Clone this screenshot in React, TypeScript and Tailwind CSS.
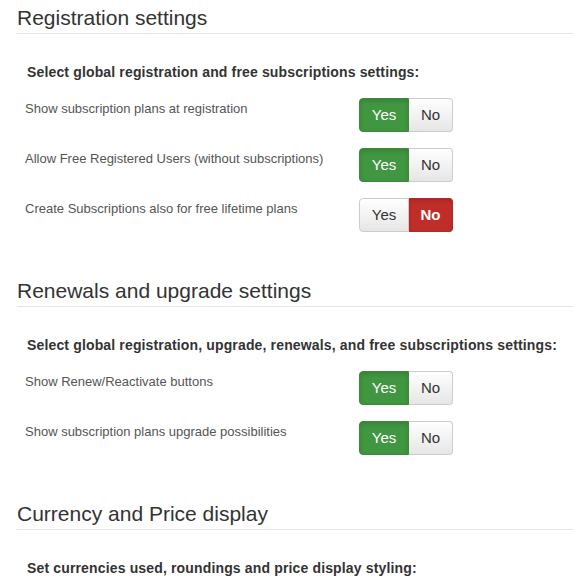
import React from "react";

type Row = { label: string; value: boolean };

function Toggle({ value }: { value: boolean }) {
  const base =
    "h-[34px] flex items-center justify-center text-[15px] border";
  return (
    <div className="flex">
      <div
        className={
          base +
          " w-[50px] rounded-l-[4px] " +
          (value
            ? "bg-[#419641] border-[#3a8a3a] text-white shadow-[inset_0_2px_4px_rgba(0,0,0,0.15)]"
            : "bg-gradient-to-b from-white to-[#e6e6e6] border-[#cccccc] text-[#333]")
        }
      >
        Yes
      </div>
      <div
        className={
          base +
          " w-[44px] rounded-r-[4px] border-l-0 " +
          (!value
            ? "bg-[#c12e2a] border-[#b02a26] text-white font-bold shadow-[inset_0_2px_4px_rgba(0,0,0,0.15)]"
            : "bg-gradient-to-b from-white to-[#e6e6e6] border-[#cccccc] text-[#333]")
        }
      >
        No
      </div>
    </div>
  );
}

function Section({
  title,
  subtitle,
  rows,
}: {
  title: string;
  subtitle: string;
  rows: Row[];
}) {
  return (
    <div className="flex flex-col">
      <h3 className="text-[21px] leading-[24px] pt-[6px] pb-[3px] border-b border-[#e5e5e5] text-[#333] font-normal">
        {title}
      </h3>
      <p className="mt-[29px] ml-[10px] text-[14px] leading-[18px] tracking-[0.15px] font-bold text-[#333]">
        {subtitle}
      </p>
      {rows.length > 0 && (
        <div className="mt-[17px] ml-[8px] flex flex-col gap-[16px]">
          {rows.map((r) => (
            <div key={r.label} className="flex">
              <div className="w-[334px] pt-[1.5px] text-[13px] leading-[18px] text-[#555]">
                {r.label}
              </div>
              <Toggle value={r.value} />
            </div>
          ))}
        </div>
      )}
    </div>
  );
}

export default function App() {
  return (
    <div
      className="w-[573px] h-[586px] overflow-hidden bg-white pl-[17px] flex flex-col gap-[41px]"
      style={{ fontFamily: '"Liberation Sans", Arial, sans-serif' }}
    >
      <Section
        title="Registration settings"
        subtitle="Select global registration and free subscriptions settings:"
        rows={[
          { label: "Show subscription plans at registration", value: true },
          {
            label: "Allow Free Registered Users (without subscriptions)",
            value: true,
          },
          { label: "Create Subscriptions also for free lifetime plans", value: false },
        ]}
      />
      <Section
        title="Renewals and upgrade settings"
        subtitle="Select global registration, upgrade, renewals, and free subscriptions settings:"
        rows={[
          { label: "Show Renew/Reactivate buttons", value: true },
          { label: "Show subscription plans upgrade possibilities", value: true },
        ]}
      />
      <Section
        title="Currency and Price display"
        subtitle="Set currencies used, roundings and price display styling:"
        rows={[]}
      />
    </div>
  );
}
